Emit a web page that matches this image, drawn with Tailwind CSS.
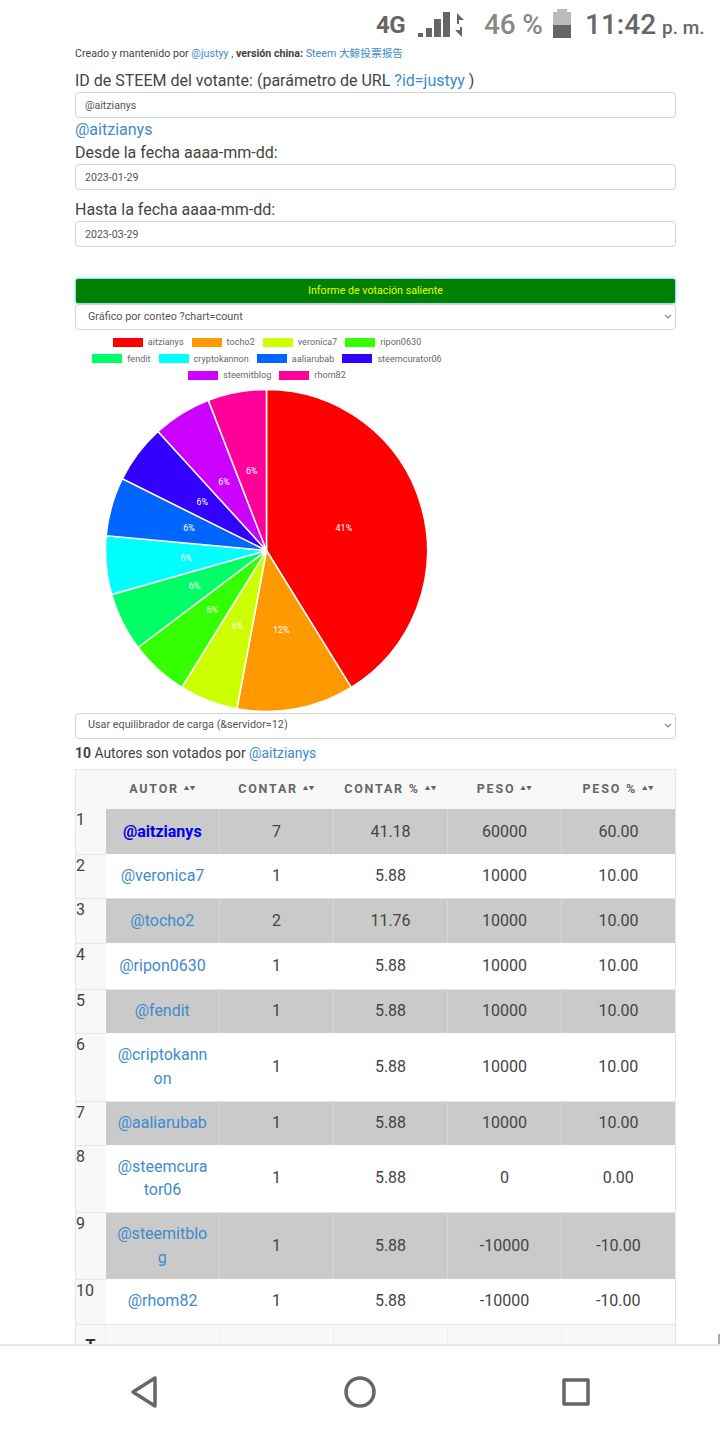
<!DOCTYPE html>
<html lang="es">
<head>
    <meta charset="UTF-8">
    <meta name="viewport" content="width=device-width, initial-scale=1.0">
    <title>Informe de votación saliente</title>
    <script src="https://cdn.jsdelivr.net/npm/@tailwindcss/browser@4"></script>
</head>
<body class="bg-white font-['Roboto','Noto_Sans_CJK_SC',sans-serif] text-[#444]">
<div class="w-[720px] h-[1440px] flex flex-col overflow-hidden">

    <!-- Status bar -->
    <div class="h-[44px] shrink-0 flex items-center relative">
        <span class="ml-[376px] mt-[6px] w-[32px] text-[24px] font-bold text-[#666] tracking-[-0.5px]">4G</span>
        <svg class="ml-[10px] mt-[5px]" width="48" height="28" viewBox="0 0 48 28" fill="#666">
            <rect x="0" y="22" width="5" height="4"/>
            <rect x="8" y="17" width="6" height="9"/>
            <rect x="16" y="8" width="7" height="18"/>
            <rect x="25" y="1" width="7" height="25"/>
            <polygon points="39,2 39,13 41,13 41,9 46,9"/>
            <polygon points="44,26 44,16 42,16 42,19 37,19"/>
        </svg>
        <span class="ml-[18px] mt-[6px] w-[60px] text-[28px] font-medium text-[#888] tracking-[-0.2px] whitespace-nowrap">46 %</span>
        <svg class="ml-[8px] mt-[3px]" width="20" height="30" viewBox="0 0 20 30">
            <rect x="5" y="0" width="10" height="3" fill="#bbb"/>
            <rect x="1" y="3" width="18" height="13" fill="#bbb"/>
            <rect x="1" y="16" width="18" height="13" fill="#666"/>
        </svg>
        <span class="ml-[13px] mt-[6px] text-[28px] font-medium text-[#666]">11:42</span>
        <span class="ml-[6px] mt-[12px] text-[19px] font-medium text-[#666]">p. m.</span>
    </div>

    <!-- Page content -->
    <div class="flex-1 overflow-hidden px-[75px] w-[676px] box-content relative">
        <div class="w-[601px]">
            <p class="text-[10.7px] leading-[20px]">Creado y mantenido por <a class="text-[#3d8bcd]">@justyy</a> , <b>versión china:</b> <a class="text-[#3d8bcd]">Steem 大鲸投票报告</a></p>

            <label class="block text-[16px] leading-[20px] mt-[7px]">ID de STEEM del votante: (parámetro de URL <a class="text-[#3d8bcd]">?id=justyy</a> )</label>
            <input class="block w-full h-[26px] mt-[1px] px-[9px] text-[10.6px] text-[#555] bg-white border border-[#d5d5d5] rounded-[4px]" value="@aitzianys">
            <a class="block text-[16px] leading-[20px] mt-[2px] text-[#3d8bcd]">@aitzianys</a>

            <label class="block text-[16px] leading-[20px] mt-[3px]">Desde la fecha aaaa-mm-dd:</label>
            <input class="block w-full h-[26px] mt-[1px] px-[9px] text-[10.6px] text-[#555] bg-white border border-[#d5d5d5] rounded-[4px]" value="2023-01-29">

            <label class="block text-[16px] leading-[20px] mt-[10px]">Hasta la fecha aaaa-mm-dd:</label>
            <input class="block w-full h-[26px] mt-[1px] px-[9px] text-[10.6px] text-[#555] bg-white border border-[#d5d5d5] rounded-[4px]" value="2023-03-29">

            <button class="block w-full h-[26px] mt-[31px] bg-[#008000] text-[#e6ff00] text-[10.7px] rounded-[3px] border border-[#a5d8f3] shadow-[0_0_5px_#b5def5]">Informe de votación saliente</button>
            <div class="relative">
                <select class="block w-full h-[26px] px-[12px] appearance-none text-[10.8px] text-[#555] bg-white border border-[#d5d5d5] rounded-[4px]">
                    <option>Gráfico por conteo ?chart=count</option>
                </select>
                <svg class="absolute right-[4px] top-[10px]" width="8" height="6" viewBox="0 0 8 6" fill="none" stroke="#888" stroke-width="1.2"><path d="M1 1l3 3 3-3"/></svg>
            </div>

            <!-- Chart legend -->
            <div class="w-[384px] mt-[4px] text-[9px] leading-[16.5px] text-[#666] tracking-[0.05px]">
                <div class="flex justify-center gap-[8px] items-center">
                    <span class="flex items-center gap-[5px]"><i class="w-[30px] h-[9px] bg-[#ff0000]"></i>aitzianys</span>
                    <span class="flex items-center gap-[5px]"><i class="w-[30px] h-[9px] bg-[#ff9900]"></i>tocho2</span>
                    <span class="flex items-center gap-[5px]"><i class="w-[30px] h-[9px] bg-[#ccff00]"></i>veronica7</span>
                    <span class="flex items-center gap-[5px]"><i class="w-[30px] h-[9px] bg-[#33ff00]"></i>ripon0630</span>
                </div>
                <div class="flex justify-center gap-[8px] items-center">
                    <span class="flex items-center gap-[5px]"><i class="w-[30px] h-[9px] bg-[#00ff66]"></i>fendit</span>
                    <span class="flex items-center gap-[5px]"><i class="w-[30px] h-[9px] bg-[#00ffff]"></i>cryptokannon</span>
                    <span class="flex items-center gap-[5px]"><i class="w-[30px] h-[9px] bg-[#0066ff]"></i>aaliarubab</span>
                    <span class="flex items-center gap-[5px]"><i class="w-[30px] h-[9px] bg-[#3300ff]"></i>steemcurator06</span>
                </div>
                <div class="flex justify-center gap-[8px] items-center">
                    <span class="flex items-center gap-[5px]"><i class="w-[30px] h-[9px] bg-[#cc00ff]"></i>steemitblog</span>
                    <span class="flex items-center gap-[5px]"><i class="w-[30px] h-[9px] bg-[#ff0099]"></i>rhom82</span>
                </div>
            </div>

            <!-- Pie chart, slices are added by the script below -->
            <svg id="pie" class="block mt-[4px] ml-[29px]" width="325" height="325" viewBox="-162.5 -162.5 325 325"></svg>

            <div class="relative">
                <select class="block w-full h-[26px] px-[12px] appearance-none text-[10.8px] text-[#555] bg-white border border-[#d5d5d5] rounded-[4px]">
                    <option>Usar equilibrador de carga (&amp;servidor=12)</option>
                </select>
                <svg class="absolute right-[4px] top-[10px]" width="8" height="6" viewBox="0 0 8 6" fill="none" stroke="#888" stroke-width="1.2"><path d="M1 1l3 3 3-3"/></svg>
            </div>
            <p class="text-[13.9px] leading-[20px] mt-[4px]"><b class="font-bold">10</b> Autores son votados por <a class="text-[#3d8bcd]">@aitzianys</a></p>

            <table class="mt-[6px] w-[601px] table-fixed border-collapse border border-[#e5e5e5] text-[16px] text-center">
                <colgroup>
                    <col class="w-[30px]"><col class="w-[114px]"><col class="w-[114px]"><col class="w-[114px]"><col class="w-[114px]"><col class="w-[114px]">
                </colgroup>
                <thead class="bg-[#f8f8f8] text-[#666] text-[12.5px] font-bold tracking-[1.8px] uppercase">
                    <tr class="h-[40px]">
                        <th></th>
                        <th class="font-bold">Autor <span class="text-[5.5px] tracking-[0.5px] align-[3px]">▲▼</span></th>
                        <th class="font-bold">Contar <span class="text-[5.5px] tracking-[0.5px] align-[3px]">▲▼</span></th>
                        <th class="font-bold">Contar % <span class="text-[5.5px] tracking-[0.5px] align-[3px]">▲▼</span></th>
                        <th class="font-bold">Peso <span class="text-[5.5px] tracking-[0.5px] align-[3px]">▲▼</span></th>
                        <th class="font-bold">Peso % <span class="text-[5.5px] tracking-[0.5px] align-[3px]">▲▼</span></th>
                    </tr>
                </thead>
                <tbody>
                    <tr class="h-[45px] bg-[#cacaca]">
                        <td class="bg-[#f8f8f8] align-top text-left leading-[22px] border-b border-[#e5e5e5]">1</td>
                        <td class="border-r border-[#d8d8d8]"><a class="text-[#0000ee] font-bold">@aitzianys</a></td>
                        <td class="border-r border-[#d8d8d8]">7</td><td class="border-r border-[#d8d8d8]">41.18</td><td class="border-r border-[#d8d8d8]">60000</td><td>60.00</td>
                    </tr>
                    <tr class="h-[44px] border-b border-[#e5e5e5]">
                        <td class="bg-[#f8f8f8] align-top text-left leading-[22px]">2</td>
                        <td><a class="text-[#3d8bcd]">@veronica7</a></td>
                        <td>1</td><td>5.88</td><td>10000</td><td>10.00</td>
                    </tr>
                    <tr class="h-[45px] bg-[#cacaca]">
                        <td class="bg-[#f8f8f8] align-top text-left leading-[22px] border-b border-[#e5e5e5]">3</td>
                        <td class="border-r border-[#d8d8d8]"><a class="text-[#3d8bcd]">@tocho2</a></td>
                        <td class="border-r border-[#d8d8d8]">2</td><td class="border-r border-[#d8d8d8]">11.76</td><td class="border-r border-[#d8d8d8]">10000</td><td>10.00</td>
                    </tr>
                    <tr class="h-[46px] border-b border-[#e5e5e5]">
                        <td class="bg-[#f8f8f8] align-top text-left leading-[22px]">4</td>
                        <td><a class="text-[#3d8bcd]">@ripon0630</a></td>
                        <td>1</td><td>5.88</td><td>10000</td><td>10.00</td>
                    </tr>
                    <tr class="h-[44px] bg-[#cacaca]">
                        <td class="bg-[#f8f8f8] align-top text-left leading-[22px] border-b border-[#e5e5e5]">5</td>
                        <td class="border-r border-[#d8d8d8]"><a class="text-[#3d8bcd]">@fendit</a></td>
                        <td class="border-r border-[#d8d8d8]">1</td><td class="border-r border-[#d8d8d8]">5.88</td><td class="border-r border-[#d8d8d8]">10000</td><td>10.00</td>
                    </tr>
                    <tr class="h-[68px] border-b border-[#e5e5e5]">
                        <td class="bg-[#f8f8f8] align-top text-left leading-[22px]">6</td>
                        <td class="leading-[23.5px]"><a class="text-[#3d8bcd]">@criptokann<br>on</a></td>
                        <td>1</td><td>5.88</td><td>10000</td><td>10.00</td>
                    </tr>
                    <tr class="h-[44px] bg-[#cacaca]">
                        <td class="bg-[#f8f8f8] align-top text-left leading-[22px] border-b border-[#e5e5e5]">7</td>
                        <td class="border-r border-[#d8d8d8]"><a class="text-[#3d8bcd]">@aaliarubab</a></td>
                        <td class="border-r border-[#d8d8d8]">1</td><td class="border-r border-[#d8d8d8]">5.88</td><td class="border-r border-[#d8d8d8]">10000</td><td>10.00</td>
                    </tr>
                    <tr class="h-[67px] border-b border-[#e5e5e5]">
                        <td class="bg-[#f8f8f8] align-top text-left leading-[22px]">8</td>
                        <td class="leading-[23.5px]"><a class="text-[#3d8bcd]">@steemcura<br>tor06</a></td>
                        <td>1</td><td>5.88</td><td>0</td><td>0.00</td>
                    </tr>
                    <tr class="h-[67px] bg-[#cacaca]">
                        <td class="bg-[#f8f8f8] align-top text-left leading-[22px] border-b border-[#e5e5e5]">9</td>
                        <td class="border-r border-[#d8d8d8] leading-[23.5px]"><a class="text-[#3d8bcd]">@steemitblo<br>g</a></td>
                        <td class="border-r border-[#d8d8d8]">1</td><td class="border-r border-[#d8d8d8]">5.88</td><td class="border-r border-[#d8d8d8]">-10000</td><td>-10.00</td>
                    </tr>
                    <tr class="h-[45px] border-b border-[#e5e5e5]">
                        <td class="bg-[#f8f8f8] align-top text-left leading-[22px]">10</td>
                        <td><a class="text-[#3d8bcd]">@rhom82</a></td>
                        <td>1</td><td>5.88</td><td>-10000</td><td>-10.00</td>
                    </tr>
                </tbody>
                <tfoot class="bg-[#f8f8f8]">
                    <tr>
                        <th class="align-top pt-[10px] font-bold text-[#333] leading-[22px]">T<br>o<br>t<br>a<br>l</th>
                        <td class="border-l border-[#f0f0f0]"></td><td class="border-l border-[#f0f0f0]"></td><td class="border-l border-[#f0f0f0]"></td><td class="border-l border-[#f0f0f0]"></td><td class="border-l border-[#f0f0f0]"></td>
                    </tr>
                </tfoot>
            </table>
        </div>
        <!-- Scrollbar thumb peeking at the bottom edge -->
        <div class="absolute left-[718px] bottom-0 w-[2px] h-[10px] bg-[#aaa]"></div>
    </div>

    <!-- Android navigation bar -->
    <div class="h-[96px] shrink-0 bg-white border-t-2 border-[#e5e5e5] flex items-center relative">
        <svg class="ml-[129px] mt-[-2px]" width="30" height="34" viewBox="0 0 30 34" fill="none" stroke="#666" stroke-width="3.5" stroke-linejoin="round">
            <polygon points="26,3 26,31 4,17"/>
        </svg>
        <svg class="ml-[184px] mt-[-2px]" width="34" height="34" viewBox="0 0 34 34" fill="none" stroke="#666" stroke-width="3.5">
            <circle cx="17" cy="17" r="14"/>
        </svg>
        <svg class="ml-[184px] mt-[-2px]" width="30" height="30" viewBox="0 0 30 30" fill="none" stroke="#666" stroke-width="3.5" stroke-linejoin="round">
            <rect x="3" y="3" width="24" height="24"/>
        </svg>
    </div>
</div>

<script>
    // Build the pie chart: votes per author, drawn clockwise from the top
    const votes = [
        ['#ff0000', 7], ['#ff9900', 2], ['#ccff00', 1], ['#33ff00', 1], ['#00ff66', 1],
        ['#00ffff', 1], ['#0066ff', 1], ['#3300ff', 1], ['#cc00ff', 1], ['#ff0099', 1]
    ];
    const total = 17;
    const r = 161;
    const pie = document.getElementById('pie');
    let angle = 0;
    let paths = '';
    let labels = '';
    votes.forEach(([color, n]) => {
        const sweep = n / total * Math.PI * 2;
        const end = angle + sweep;
        const large = sweep > Math.PI ? 1 : 0;
        paths += `<path fill="${color}" stroke="#fff" stroke-width="1.5" d="M0 0L${r * Math.sin(angle)} ${-r * Math.cos(angle)}A${r} ${r} 0 ${large} 1 ${r * Math.sin(end)} ${-r * Math.cos(end)}Z"/>`;
        const mid = angle + sweep / 2;
        labels += `<text x="${r / 2 * Math.sin(mid)}" y="${-r / 2 * Math.cos(mid) + 3}" fill="#fff" font-size="9" text-anchor="middle">${Math.round(n / total * 100)}%</text>`;
        angle = end;
    });
    pie.innerHTML = paths + labels;
</script>
</body>
</html>
